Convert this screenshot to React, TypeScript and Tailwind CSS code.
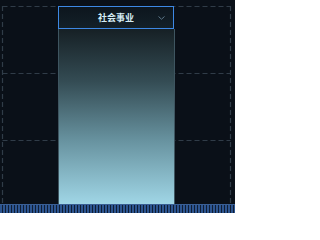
import React from "react";

export default function App() {
  const hLines = [6.5, 73.5, 140.5, 207.5];
  return (
    <div className="relative w-[235px] h-[213px] overflow-hidden bg-[#0a1018] font-['Noto_Sans_CJK_SC',sans-serif]">
      <svg className="absolute inset-0" width="235" height="213">
        {hLines.map((y) => (
          <line key={y} x1="2.5" y1={y} x2="230.5" y2={y} stroke="#303c48" strokeWidth="1.2" strokeDasharray="5 3" />
        ))}
        <line x1="2.5" y1="6" x2="2.5" y2="213" stroke="#303c48" strokeWidth="1.2" strokeDasharray="5 3" />
        <line x1="230.5" y1="6" x2="230.5" y2="213" stroke="#303c48" strokeWidth="1.2" strokeDasharray="5 3" />
      </svg>
      <div className="relative flex flex-col h-full">
        <div className="flex flex-col flex-1 pt-[6px] pl-[58px] w-[175px] box-content">
          <div className="flex items-center justify-center relative h-[23px] w-[116px] border-[1.5px] border-[#3d88e4] bg-[linear-gradient(to_bottom,#0d161e,#132028)]">
            <span className="text-[9px] font-bold leading-none text-[#d4ecf4]">社会事业</span>
            <svg className="absolute right-[8px] top-[9px]" width="7" height="4" viewBox="0 0 7 4">
              <path d="M0.5 0.5 L3.5 3.2 L6.5 0.5" fill="none" stroke="#5d7688" strokeWidth="1" />
            </svg>
          </div>
          <div className="flex-1 w-[117px] bg-[linear-gradient(to_bottom,#162025,#344c54_30%,#6893a0_64%,#a0d6e6)] border-x border-[#3e5560]" />
        </div>
        <div className="h-[9px] bg-[repeating-linear-gradient(to_right,#2d5590_0px,#2d5590_2px,#101e34_2px,#101e34_3px)] border-t border-[#3a5f94]" />
      </div>
    </div>
  );
}
